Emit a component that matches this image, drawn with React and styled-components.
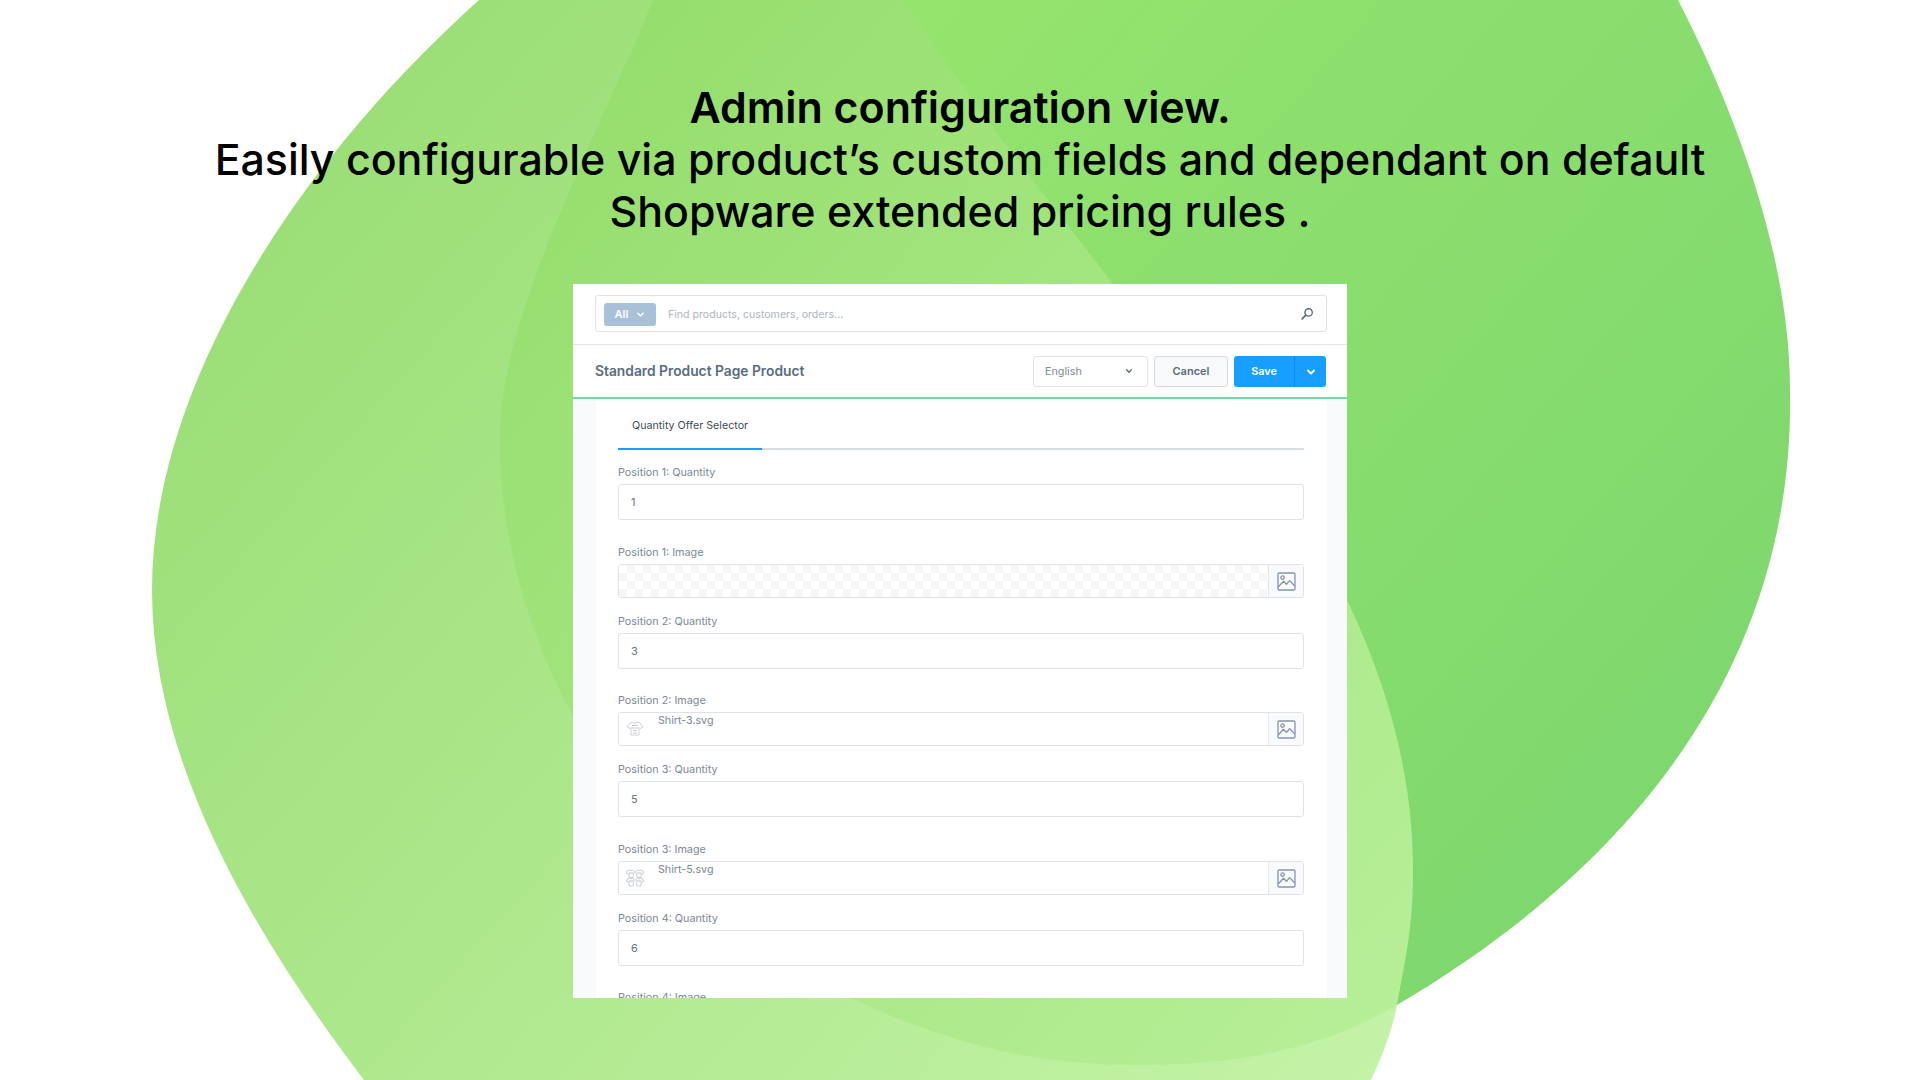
import React from "react";
import styled, { createGlobalStyle } from "styled-components";

const Global = createGlobalStyle`
  html, body { margin: 0; padding: 0; background: #fff; }
  body { font-family: Inter, "Liberation Sans", sans-serif; }
  * { box-sizing: border-box; }
`;

const Page = styled.div`
  position: relative;
  width: 1920px;
  height: 1080px;
  overflow: hidden;
  background: #fff;
`;

const Backdrop = styled.svg`
  position: absolute;
  inset: 0;
  width: 1920px;
  height: 1080px;
`;

const Content = styled.div`
  position: relative;
  display: flex;
  flex-direction: column;
  align-items: center;
  padding-top: 81px;
`;

const Heading = styled.div`
  width: 1560px;
  margin-bottom: 47px;
  text-align: center;
  font-size: 42.9px;
  line-height: 52px;
  font-weight: 500;
  color: #000;
  strong { display: block; font-weight: 600; }
`;

const Panel = styled.div`
  width: 774px;
  height: 714px;
  overflow: hidden;
  background: #fff;
  display: flex;
  flex-direction: column;
`;

const SearchRow = styled.div`
  height: 61px;
  padding: 11px 20px 0 22px;
  border-bottom: 1.5px solid #e3e7eb;
`;

const SearchBox = styled.div`
  height: 37px;
  display: flex;
  align-items: center;
  padding: 1px 12px 0 8px;
  border: 1px solid #dfe3e8;
  border-bottom-width: 1.5px;
  border-radius: 3px;
`;

const AllButton = styled.div`
  width: 52px;
  height: 23px;
  display: flex;
  align-items: center;
  justify-content: center;
  gap: 8px;
  background: #a9c0d9;
  border-radius: 3px;
  color: #fff;
  font-size: 11px;
  font-weight: 600;
`;

const Placeholder = styled.div`
  flex: 1;
  margin-left: 12px;
  font-size: 10.6px;
  color: #adb5bf;
`;

const HeaderRow = styled.div`
  height: 54px;
  display: flex;
  align-items: center;
  padding: 0 21px 0 22px;
  border-bottom: 2px solid #76d7a6;
`;

const PageTitle = styled.div`
  flex: 1;
  font-size: 13.8px;
  font-weight: 600;
  color: #5a6c7f;
`;

const LangSelect = styled.div`
  width: 115px;
  height: 31px;
  display: flex;
  align-items: center;
  justify-content: space-between;
  padding: 0 14px 0 11px;
  border: 1px solid #e0e4e9;
  border-radius: 3px;
  font-size: 10.8px;
  color: #7d8b99;
`;

const CancelButton = styled.div`
  width: 74px;
  height: 31px;
  margin-left: 6px;
  display: flex;
  align-items: center;
  justify-content: center;
  background: #f8f9fa;
  border: 1px solid #d6dbe1;
  border-radius: 3px;
  font-size: 11px;
  font-weight: 600;
  color: #5b6b7c;
`;

const SaveButton = styled.div`
  width: 92px;
  height: 31px;
  margin-left: 6px;
  display: flex;
  background: #189eff;
  border-radius: 3px;
  color: #fff;
  font-size: 10.8px;
  font-weight: 600;
`;

const SaveLabel = styled.div`
  width: 61px;
  display: flex;
  align-items: center;
  justify-content: center;
  border-right: 1px solid #0f87de;
`;

const SaveCaret = styled.div`
  flex: 1;
  display: flex;
  align-items: center;
  justify-content: center;
  padding: 1px 0 0 1px;
`;

const Body = styled.div`
  flex: 1;
  min-height: 0;
  display: flex;
  background: #f9fafb;
  padding: 0 20px 0 23px;
`;

const Card = styled.div`
  flex: 1;
  background: #fff;
  padding: 0 23px 0 22px;
`;

const TabBar = styled.div`
  height: 51px;
  margin-bottom: 15px;
  border-bottom: 2px solid #d5dce3;
  display: flex;
`;

const Tab = styled.div`
  width: 144px;
  height: 51px;
  padding: 20px 0 0 14px;
  border-bottom: 2px solid #189eff;
  font-size: 10.7px;
  line-height: 14px;
  color: #3f4c58;
`;

const Field = styled.div`
  margin-bottom: ${(p) => p.$gap}px;
`;

const Label = styled.div`
  height: 14px;
  margin-bottom: 5px;
  padding-top: 1px;
  font-size: 10.8px;
  line-height: 14px;
  color: #7b8894;
`;

const TextInput = styled.div`
  height: 36px;
  display: flex;
  align-items: center;
  padding-left: 12px;
  border: 1px solid #dfe3e8;
  border-bottom-width: 1.5px;
  border-radius: 3px;
  font-size: 11px;
  color: #67747f;
`;

const ImageInput = styled.div`
  height: 34px;
  display: flex;
  border: 1px solid #dfe3e8;
  border-bottom-width: 1.5px;
  border-radius: 3px;
  overflow: hidden;
`;

const ImageValue = styled.div`
  flex: 1;
  display: flex;
  padding: 1px 0 0 5px;
  background-color: #fff;
  ${(p) =>
    p.$empty &&
    `background-image: conic-gradient(#f6f6f6 25%, #fff 0 50%, #f6f6f6 0 75%, #fff 0);
     background-size: 16px 16px;`}
`;

const Thumb = styled.svg`
  width: 22px;
  height: 22px;
  margin-top: 4px;
  flex: none;
`;

const FileName = styled.div`
  margin-left: 12px;
  font-size: 10.7px;
  line-height: 14px;
  color: #7b8894;
`;

const Addon = styled.div`
  width: 35px;
  display: flex;
  align-items: center;
  justify-content: center;
  padding-top: 1px;
  background: #f9fafb;
  border-left: 1px solid #e3e7eb;
`;

const backBlob =
  "M1678 0C1745 130 1790 270 1790 389C1795 640 1660 850 1397 1005C1310 1056 1220 1065 1131 1065" +
  "C1040 1065 950 1045 851 998C700 925 495 700 500 430C503 310 600 130 653 0Z";

const frontBlob =
  "M479 0C290 170 152 390 152 590C152 760 250 930 364 1080L1371 1080C1385 1050 1392 1030 1397 1005" +
  "C1405 960 1413 930 1413 870C1413 790 1395 700 1347 600C1240 430 980 130 906 0Z";

const Chevron = ({ color, size = 9, weight = 1.6 }) => (
  <svg width={size} height={size} viewBox="0 0 10 10" fill="none">
    <path d="M2 3.5 5 6.5 8 3.5" stroke={color} strokeWidth={weight} strokeLinecap="round" strokeLinejoin="round" />
  </svg>
);

const SearchIcon = () => (
  <svg width="14" height="14" viewBox="0 0 14 14" fill="none" stroke="#5b6b7c">
    <circle cx="8.6" cy="5.4" r="3.7" strokeWidth="1.4" />
    <path d="M5.8 8.2 2.2 11.8" strokeWidth="1.7" strokeLinecap="round" />
  </svg>
);

const PictureIcon = () => (
  <svg width="19" height="19" viewBox="0 0 19 19" fill="none" stroke="#8496aa" strokeWidth="1.3">
    <rect x="1" y="1" width="17" height="17" rx="1.2" />
    <circle cx="5.6" cy="5.6" r="1.7" />
    <path d="M1.2 15 6.5 9.3 9.5 12.4 12.6 8.6 17.8 14" strokeLinejoin="round" />
  </svg>
);

const ShirtThreeThumb = () => (
  <Thumb viewBox="0 0 22 22" fill="none" stroke="#c3c7cc" strokeWidth="0.8">
    <path d="M6 5 9 4 11 5.500 13 4 16 5 19 9 16 10.500 15 9.500 15 17 7 17 7 9.500 6 10.500 3 9Z" />
    <path d="M8 7.500 14 7.500M8 10 14 10M9 12.500 13 12.500M9 15 13 15" strokeWidth="1" />
  </Thumb>
);

const ShirtFiveThumb = () => (
  <Thumb viewBox="0 0 22 22" fill="none" stroke="#bcc1c6" strokeWidth="0.8">
    <path d="M3 4 5.500 3 7 4 8.500 3 10.500 4.500 9.500 7 9 10.500 5 10.500 5 7 2.500 6.500Z" />
    <path d="M19 4 16.500 3 15 4 13.500 3 11.500 4.500 12.500 7 13 10.500 17 10.500 17 7 19.500 6.500Z" />
    <path d="M3 12 5.500 11 7 12 8.500 11 10.500 12.500 9.500 15 9 19 5 19 5 15 2.500 14.500Z" />
    <path d="M19 12 16.500 11 15 12 13.500 11 11.500 12.500 12.500 15 13 19 17 19 17 15 19.500 14.500Z" />
    <path d="M5 6H9M13 6H17M5 14H9M13 14H17" strokeWidth="1" />
  </Thumb>
);

const fields = [
  { kind: "qty", label: "Position 1: Quantity", value: "1" },
  { kind: "img", label: "Position 1: Image" },
  { kind: "qty", label: "Position 2: Quantity", value: "3" },
  { kind: "img", label: "Position 2: Image", file: "Shirt-3.svg", thumb: <ShirtThreeThumb /> },
  { kind: "qty", label: "Position 3: Quantity", value: "5" },
  { kind: "img", label: "Position 3: Image", file: "Shirt-5.svg", thumb: <ShirtFiveThumb /> },
  { kind: "qty", label: "Position 4: Quantity", value: "6" },
  { kind: "img", label: "Position 4: Image" },
];

export default function App() {
  return (
    <Page>
      <Global />
      <Backdrop viewBox="0 0 1920 1080">
        <defs>
          <linearGradient id="back" gradientUnits="userSpaceOnUse" x1="900" y1="0" x2="1700" y2="700">
            <stop offset="0" stopColor="#95e46d" />
            <stop offset="1" stopColor="#7fd86e" />
          </linearGradient>
          <linearGradient id="front" gradientUnits="userSpaceOnUse" x1="300" y1="100" x2="1400" y2="1080">
            <stop offset="0" stopColor="#8fda66" />
            <stop offset="1" stopColor="#bef29e" />
          </linearGradient>
        </defs>
        <path d={backBlob} fill="url(#back)" />
        <path d={frontBlob} fill="url(#front)" fillOpacity="0.9" />
      </Backdrop>
      <Content>
        <Heading>
          <strong>Admin configuration view.</strong>
          Easily configurable via product’s custom fields and dependant on default
          <br />
          Shopware extended pricing rules .
        </Heading>
        <Panel>
          <SearchRow>
            <SearchBox>
              <AllButton>
                All
                <Chevron color="#fff" />
              </AllButton>
              <Placeholder>Find products, customers, orders...</Placeholder>
              <SearchIcon />
            </SearchBox>
          </SearchRow>
          <HeaderRow>
            <PageTitle>Standard Product Page Product</PageTitle>
            <LangSelect>
              English
              <Chevron color="#5b6b7c" size={8} />
            </LangSelect>
            <CancelButton>Cancel</CancelButton>
            <SaveButton>
              <SaveLabel>Save</SaveLabel>
              <SaveCaret>
                <Chevron color="#fff" size={10} weight={1.8} />
              </SaveCaret>
            </SaveButton>
          </HeaderRow>
          <Body>
            <Card>
              <TabBar>
                <Tab>Quantity Offer Selector</Tab>
              </TabBar>
              {fields.map((f) =>
                f.kind === "qty" ? (
                  <Field key={f.label} $gap={24.5}>
                    <Label>{f.label}</Label>
                    <TextInput>{f.value}</TextInput>
                  </Field>
                ) : (
                  <Field key={f.label} $gap={16}>
                    <Label>{f.label}</Label>
                    <ImageInput>
                      <ImageValue $empty={!f.file}>
                        {f.thumb}
                        {f.file && <FileName>{f.file}</FileName>}
                      </ImageValue>
                      <Addon>
                        <PictureIcon />
                      </Addon>
                    </ImageInput>
                  </Field>
                )
              )}
            </Card>
          </Body>
        </Panel>
      </Content>
    </Page>
  );
}
